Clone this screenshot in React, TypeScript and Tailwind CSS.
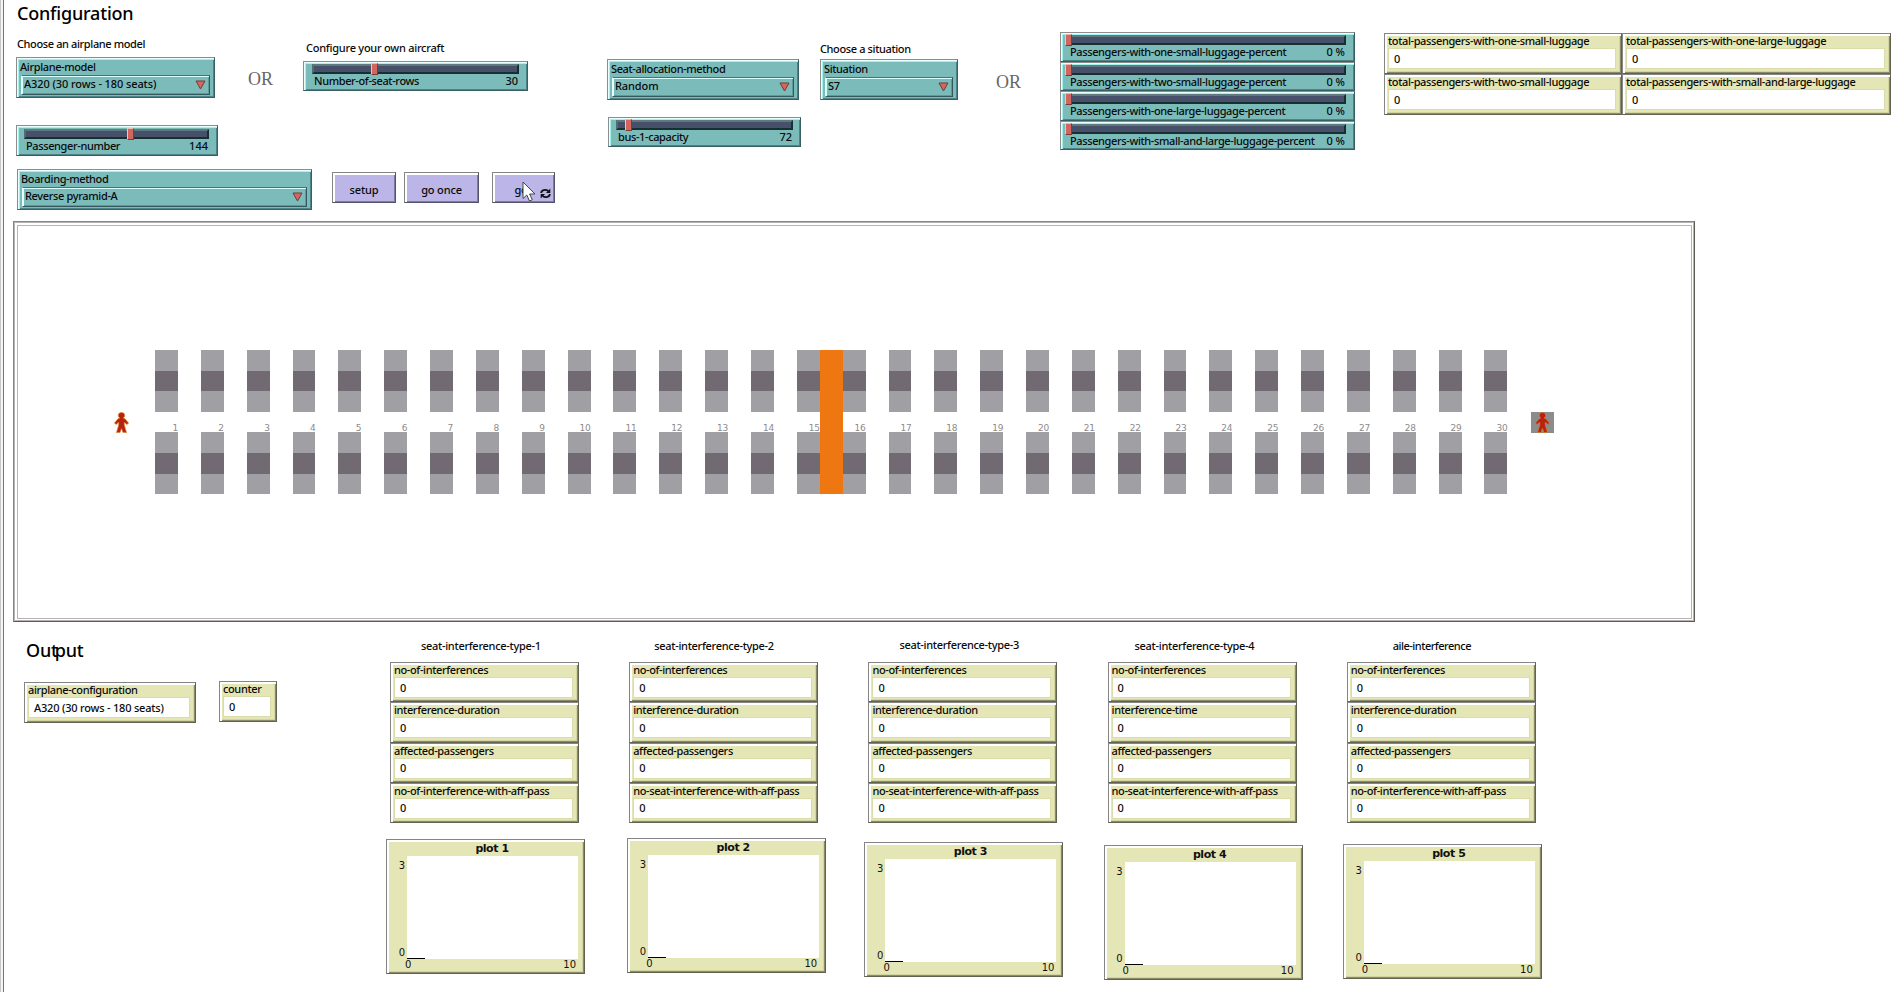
import type { ReactNode } from 'react';

const TEXT = "whitespace-pre font-['Noto_Sans','Open_Sans',sans-serif] text-[11px] leading-[12px] font-medium text-[#0a0a0a]";
const LABEL = `${TEXT} tracking-[-0.38px]`;
const TEAL_RAISED =
  'border border-t-[#8f8c8c] border-l-[#8f8c8c] border-r-[#3a5f63] border-b-[#3a5f63] bg-[#7bbcbb] shadow-[inset_1px_1px_0_#e9ffff,inset_2px_2px_0_#a5f1ee,inset_-1px_-1px_0_#4b8488]';
const KHAKI_RAISED =
  'border border-t-[#858585] border-l-[#858585] border-r-[#626252] border-b-[#626252] bg-[#e5e6b5] shadow-[inset_2px_2px_0_#fff,inset_-1px_-1px_0_#8c8b69,inset_-2px_-2px_0_#d3d4a0]';

function Triangle() {
  return (
    <svg className="h-[10px] w-[11px]" viewBox="0 0 11 10">
      <path d="M1 1H10L5.5 9Z" fill="#d9645c" stroke="#6d3f3c" strokeWidth="1" />
    </svg>
  );
}

function Chooser({
  label,
  value,
  valueClass = 'tracking-[-0.35px]',
  className,
}: {
  label: string;
  value: string;
  valueClass?: string;
  className: string;
}) {
  return (
    <div className={`flex h-[41px] shrink-0 flex-col pr-[4px] pl-[3px] ${TEAL_RAISED} ${className}`}>
      <span className={`${LABEL} mt-[3px] h-[12px]`}>{label}</span>
      <div className="mt-[2px] ml-[1px] flex h-[20px] items-center justify-between border border-t-[#5b6b6b] border-l-[#e9ffff] border-r-[#35585c] border-b-[#35585c] pr-[3px] pl-[2px] shadow-[inset_1px_1px_0_#d9ffff,inset_-1px_-1px_0_#5d9a9b]">
        <span className={`${TEXT} ${valueClass} -mt-[2px]`}>{value}</span>
        <Triangle />
      </div>
    </div>
  );
}

function Slider({
  label,
  value,
  handle,
  className,
}: {
  label: string;
  value: string;
  handle: number;
  className: string;
}) {
  return (
    <div className={`flex shrink-0 flex-col ${TEAL_RAISED} ${className}`}>
      <div className="relative mt-[2px] h-[10px] border-2 border-t-[#5f7a7c] border-l-[#4f6e70] border-r-[#17302f] border-b-[#17302f] bg-[#47506a]">
        <div
          className="absolute -top-[3px] h-[12px] w-[7px] border border-t-[#f0b9b2] border-l-[#f3c4be] border-r-[#7d3b37] border-b-[#7d3b37] bg-[#d3655e]"
          style={{ left: handle }}
        />
      </div>
      <div className={`${LABEL} mt-px flex justify-between pr-px pl-[2px]`}>
        <span>{label}</span>
        <span className="tracking-normal">{value}</span>
      </div>
    </div>
  );
}

function Monitor({
  label,
  value,
  valueClass = 'tracking-normal',
  className,
}: {
  label: string;
  value: string;
  valueClass?: string;
  className: string;
}) {
  return (
    <div className={`flex shrink-0 flex-col pr-[6px] pl-[4px] ${KHAKI_RAISED} ${className}`}>
      <span className={`${LABEL} mt-[1px] -ml-px h-[12px]`}>{label}</span>
      <div className="mt-[2px] flex h-[19px] items-center bg-white pl-[5px] shadow-[0_0_0_1px_#dadcaa]">
        <span className={`${TEXT} ${valueClass}`}>{value}</span>
      </div>
    </div>
  );
}

function Plot({ title, className }: { title: string; className: string }) {
  return (
    <div
      className={`flex h-[135px] w-[199px] shrink-0 flex-col font-['DejaVu_Sans',sans-serif] text-[10px] leading-[12px] text-[#111] ${KHAKI_RAISED} ${className}`}
    >
      <div className="mt-[3px] h-[13px] pl-[13px] text-center text-[11px] font-bold tracking-[-0.45px]">{title}</div>
      <div className="flex h-[103px]">
        <div className="flex w-[20px] flex-col justify-between pt-[4px] pr-[2px] text-right">
          <span>3</span>
          <span>0</span>
        </div>
        <div className="flex w-[171px] items-end bg-white">
          <div className="h-[1px] w-[18px] bg-black" />
        </div>
      </div>
      <div className="flex justify-between pr-[8px] pl-[18px]">
        <span>0</span>
        <span>10</span>
      </div>
    </div>
  );
}

function Button({ children, className }: { children: ReactNode; className: string }) {
  return (
    <button
      className={`relative flex h-[31px] shrink-0 items-center justify-center border border-t-[#858585] border-l-[#858585] border-r-[#55536a] border-b-[#55536a] bg-[#bcb5e7] pt-[4px] shadow-[inset_2px_2px_0_#fff,inset_-1px_-1px_0_#7f7aa3] ${TEXT} tracking-[-0.15px] ${className}`}
    >
      {children}
    </button>
  );
}

function Person() {
  return (
    <svg className="h-[21px] w-[15px]" viewBox="0 0 15 21">
      <path
        d="M7.500 .5C9.600 .5 10.700 1.800 10.700 3.300C10.700 4.600 10 5.500 9.200 6L11 6.800L14.500 11L13 12.500L10.300 10.300V13L12.500 20.500H9L7.500 16.500L6 20.500H2.500L4.700 13V10.300L2 12.500L.5 11L4 6.800L5.800 6C5 5.500 4.300 4.600 4.300 3.300C4.300 1.800 5.400 .5 7.500 .5Z"
        fill="#b8230f"
        stroke="#d9822a"
        strokeWidth=".7"
      />
    </svg>
  );
}

function SeatBlock() {
  return (
    <div className="flex h-[61.900px] w-[22.930px] flex-col bg-[#a09fa4] py-[20.600px]">
      <div className="grow bg-[#716a73]" />
    </div>
  );
}

const rows = Array.from({ length: 30 }, (_, i) => i + 1);

const luggage = [
  'Passengers-with-one-small-luggage-percent',
  'Passengers-with-two-small-luggage-percent',
  'Passengers-with-one-large-luggage-percent',
  'Passengers-with-small-and-large-luggage-percent',
];

const outputs = [
  {
    heading: 'seat-interference-type-1',
    headingClass: 'ml-[31px] mt-[1px] tracking-[-0.3px]',
    labels: ['no-of-interferences', 'interference-duration', 'affected-passengers', 'no-of-interference-with-aff-pass'],
    plotClass: '-ml-[4px] mt-[16px]',
  },
  {
    heading: 'seat-interference-type-2',
    headingClass: 'ml-[25px] mt-[1px] tracking-[-0.3px]',
    labels: ['no-of-interferences', 'interference-duration', 'affected-passengers', 'no-seat-interference-with-aff-pass'],
    plotClass: '-ml-[2px] mt-[15px]',
  },
  {
    heading: 'seat-interference-type-3',
    headingClass: 'ml-[31px] mt-0 tracking-[-0.3px]',
    labels: ['no-of-interferences', 'interference-duration', 'affected-passengers', 'no-seat-interference-with-aff-pass'],
    plotClass: '-ml-[4px] mt-[19px]',
  },
  {
    heading: 'seat-interference-type-4',
    headingClass: 'ml-[27px] mt-[1px] tracking-[-0.3px]',
    labels: ['no-of-interferences', 'interference-time', 'affected-passengers', 'no-seat-interference-with-aff-pass'],
    plotClass: '-ml-[4px] mt-[22px]',
  },
  {
    heading: 'aile-interference',
    headingClass: 'ml-[46px] mt-[1px] tracking-[-0.5px]',
    labels: ['no-of-interferences', 'interference-duration', 'affected-passengers', 'no-of-interference-with-aff-pass'],
    plotClass: '-ml-[4px] mt-[21px]',
  },
];

const HEADING = "font-['Noto_Sans','Open_Sans',sans-serif] text-[18px] leading-[20px] font-medium text-black";
const OR = "font-['Liberation_Serif',serif] text-[18px] leading-[20px] text-[#666]";

export default function App() {
  return (
    <div className="flex h-[992px] w-[1900px] overflow-hidden bg-white">
      <div className="w-[4px] shrink-0 border-r border-l border-r-[#77767c] border-l-[#c9c9c9] bg-[#f4f4f4]" />
      <main className="flex w-[1896px] flex-col">
        <section className="flex h-[221px]">
          <div className="w-[600px] shrink-0 pl-[12px]">
            <div className="flex h-[125px]">
              <div className="w-[200px] pt-[3px]">
                <h1 className={`${HEADING} pl-[1px] tracking-[-0.2px]`}>Configuration</h1>
                <p className={`${LABEL} mt-[15px] pl-[1px]`}>Choose an airplane model</p>
                <Chooser
                  label="Airplane-model"
                  value="A320 (30 rows - 180 seats)"
                  valueClass="tracking-[-0.1px]"
                  className="mt-[7px] w-[199px]"
                />
              </div>
              <span className={`${OR} mt-[69px] ml-[32px] w-[55px]`}>OR</span>
              <div className="pt-[42px]">
                <p className={`${TEXT} pl-[3px] tracking-[-0.25px]`}>Configure your own aircraft</p>
                <Slider label="Number-of-seat-rows" value="30" handle={57} className="mt-[7px] h-[30px] w-[225px] px-[8px]" />
              </div>
            </div>
            <Slider label="Passenger-number" value="144" handle={101} className="h-[31px] w-[202px] pt-px pr-[8px] pl-[7px]" />
            <div className="mt-[13px] flex pl-[1px]">
              <Chooser label="Boarding-method" value="Reverse pyramid-A" className="w-[295px]" />
              <Button className="mt-[3px] ml-[20px] w-[64px]">setup</Button>
              <Button className="mt-[3px] ml-[8px] w-[75px]">go once</Button>
              <Button className="mt-[3px] ml-[13px] w-[63px]">
                <span className="-ml-[5px]">go</span>
                <svg className="absolute top-[15px] left-[47px] h-[11px] w-[11px]" viewBox="0 0 11 11" fill="none" stroke="#111" strokeWidth="1.8">
                  <path d="M1.200 5C1.200 2 5.500 .8 8.300 3M9.800 6C9.800 9 5.500 10.200 2.700 8" />
                  <path d="M10.300 .5V5H6ZM.7 10.500V6H5Z" fill="#111" stroke="none" />
                </svg>
                <svg className="absolute top-[8px] left-[29px] h-[21px] w-[14px]" viewBox="0 0 14 21">
                  <path d="M1 1V17.500L4.800 14L7.500 20L10.300 18.700L7.600 13H13Z" fill="#fff" stroke="#444" strokeWidth="1" />
                </svg>
              </Button>
            </div>
          </div>

          <div className="w-[212px] shrink-0 pt-[59px] pl-[3px]">
            <Chooser label="Seat-allocation-method" value="Random" valueClass="tracking-[-0.1px]" className="w-[192px]" />
            <Slider label="bus-1-capacity" value="72" handle={7} className="mt-[17px] ml-[1px] h-[30px] w-[193px] px-[7px]" />
          </div>
          <div className="w-[180px] shrink-0 pt-[43px] pl-[4px]">
            <p className={LABEL}>Choose a situation</p>
            <Chooser label="Situation" value="S7" className="mt-[4px] w-[138px]" />
          </div>
          <span className={`${OR} mt-[72px] w-[64px] shrink-0`}>OR</span>

          <div className="mt-[32px] h-[119px] w-[295px] shrink-0">
            {luggage.map((label) => (
              <Slider key={label} label={label} value="0 %" handle={-5} className="h-[29.500px] pr-[8px] pl-[7px]" />
            ))}
          </div>

          <div className="mt-[33px] ml-[29px] grid h-[82px] grid-cols-[238px_269px]">
            <Monitor label="total-passengers-with-one-small-luggage" value="0" className="h-[41px]" />
            <Monitor label="total-passengers-with-one-large-luggage" value="0" className="h-[41px]" />
            <Monitor label="total-passengers-with-two-small-luggage" value="0" className="h-[41px]" />
            <Monitor label="total-passengers-with-small-and-large-luggage" value="0" className="h-[41px]" />
          </div>
        </section>

        <section className="ml-[9px] h-[401px] w-[1682px] border border-t-[#858585] border-l-[#858585] border-r-[#5c5c55] border-b-[#5c5c55]">
          <div className="h-[399px] border-t-[4px] border-r-[3px] border-b-[3px] border-l-[4px] border-double border-t-[#b5b5b5] border-r-[#b9b0b2] border-b-[#b9b0b2] border-l-[#b5b5b5]">
            <div className="flex items-center pt-[124px] pl-[96px]">
              <Person />
              <div className="relative ml-[26px] flex w-[1375.500px]">
                {rows.map((row) => (
                  <div key={row} className="w-[45.850px] shrink-0">
                    <SeatBlock />
                    <div className="h-[20.600px] w-[23px] pt-[10px] text-right font-['DejaVu_Sans',sans-serif] text-[9px] leading-[12px] tracking-[-0.2px] text-[#8e8a8a]">
                      {row}
                    </div>
                    <SeatBlock />
                  </div>
                ))}
                <div className="absolute top-0 left-[664.700px] h-[144.400px] w-[23px] bg-[#ee7711]" />
              </div>
              <div className="flex h-[21px] w-[23px] items-center justify-center bg-[#8c8c8c]">
                <Person />
              </div>
            </div>
          </div>
        </section>

        <section className="flex pt-[17px]">
          <div className="w-[386px] shrink-0 pl-[20px]">
            <h1 className={`${HEADING} pt-px pl-[2px] tracking-[-0.2px]`}>
              Out<span className="-ml-[3px]">put</span>
            </h1>
            <div className="mt-[21px] flex items-start">
              <Monitor
                label="airplane-configuration"
                value="A320 (30 rows - 180 seats)"
                valueClass="tracking-[-0.2px]"
                className="mt-[1px] h-[41px] w-[172px]"
              />
              <Monitor label="counter" value="0" className="ml-[23px] h-[41px] w-[58px]" />
            </div>
          </div>
          {outputs.map((group) => (
            <div key={group.heading} className="w-[239.200px] shrink-0">
              <div className="flex h-[23px] items-start">
                <h2 className={`${TEXT} ${group.headingClass}`}>{group.heading}</h2>
              </div>
              <div className="flex h-[161px] flex-col">
                {group.labels.map((label) => (
                  <Monitor key={label} label={label} value="0" className="h-[40.250px] w-[189px]" />
                ))}
              </div>
              <Plot title={`plot ${outputs.indexOf(group) + 1}`} className={group.plotClass} />
            </div>
          ))}
        </section>
      </main>
    </div>
  );
}
